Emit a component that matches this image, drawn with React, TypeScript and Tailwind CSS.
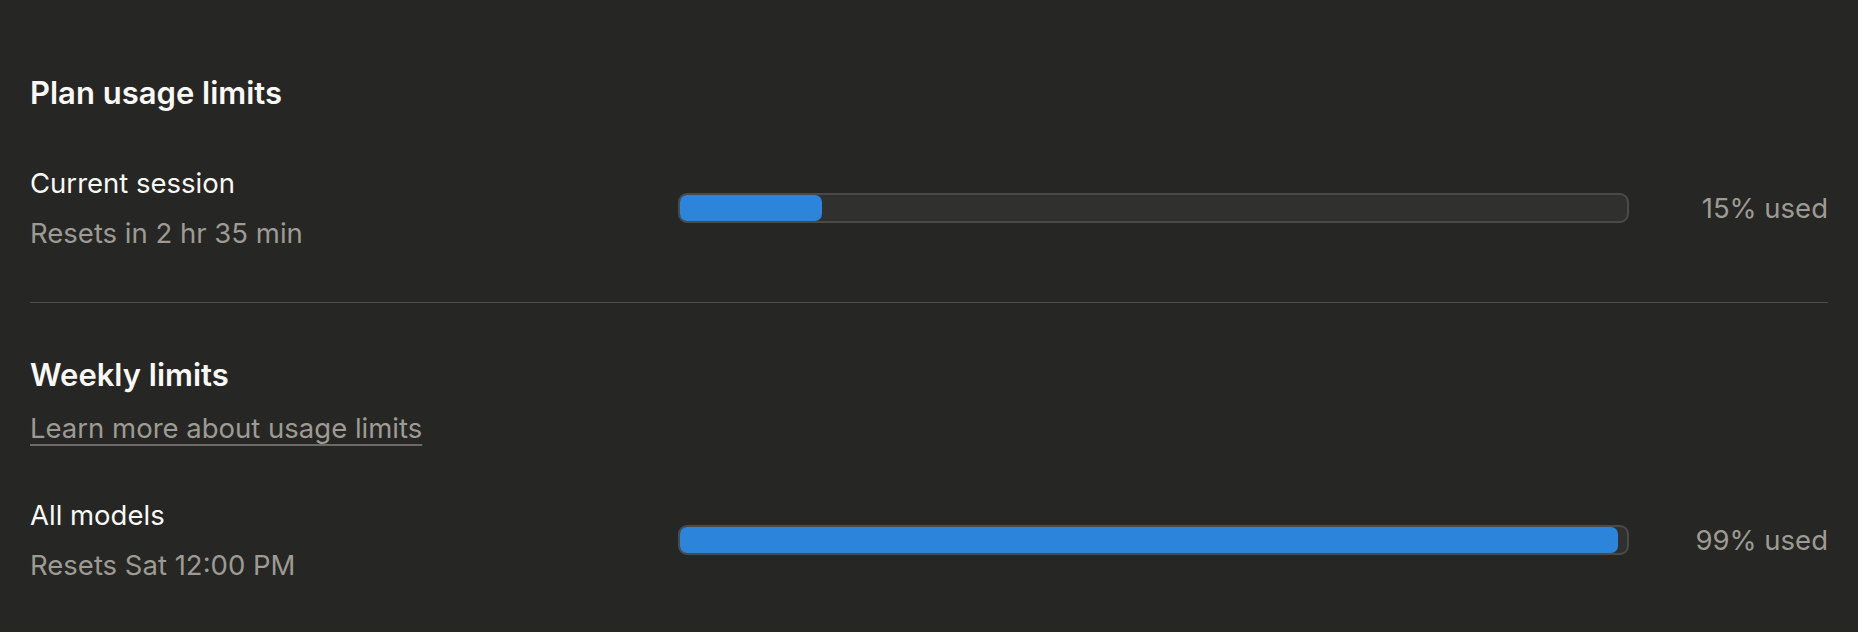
import React from "react";

const rows = {
  session: { label: "Current session", reset: "Resets in 2 hr 35 min", pct: 15 },
  weekly: { label: "All models", reset: "Resets Sat 12:00 PM", pct: 99 },
};

function UsageRow({ label, reset, pct }: { label: string; reset: string; pct: number }) {
  return (
    <div className="flex items-center">
      <div className="flex w-[648px] shrink-0 flex-col gap-[14px]">
        <div className="text-[27.5px] leading-[36px] text-[#faf9f5]">{label}</div>
        <div className="text-[27.5px] leading-[36px] text-[#9d9b93]">{reset}</div>
      </div>
      <div className="h-[30px] flex-1 rounded-[9px] border-2 border-[#4a4a47] bg-[#30302e]">
        <div className="h-full rounded-[7px] bg-[#2c84db]" style={{ width: `${pct}%` }} />
      </div>
      <div className="w-[199px] shrink-0 text-right text-[27.5px] leading-[36px] text-[#9d9b93]">
        {pct}% used
      </div>
    </div>
  );
}

export default function App() {
  return (
    <div
      className="min-h-screen bg-[#262624] px-[30px] pt-[75px]"
      style={{ fontFamily: "Inter, 'Noto Sans', sans-serif" }}
    >
      <h2 className="text-[31px] font-semibold leading-[36px] text-[#faf9f5]">Plan usage limits</h2>
      <div className="mt-[54px]">
        <UsageRow {...rows.session} />
      </div>

      <div className="mt-[51px] h-px bg-[#4d4d4a]" />

      <h2 className="mt-[54px] text-[31px] font-semibold leading-[36px] text-[#faf9f5]">Weekly limits</h2>
      <a
        href="#"
        className="mt-[17px] inline-block text-[27.5px] leading-[36px] text-[#9d9b93] underline decoration-[#6b6a65] decoration-2 underline-offset-[6px]"
      >
        Learn more about usage limits
      </a>
      <div className="mt-[51px]">
        <UsageRow {...rows.weekly} />
      </div>
    </div>
  );
}
